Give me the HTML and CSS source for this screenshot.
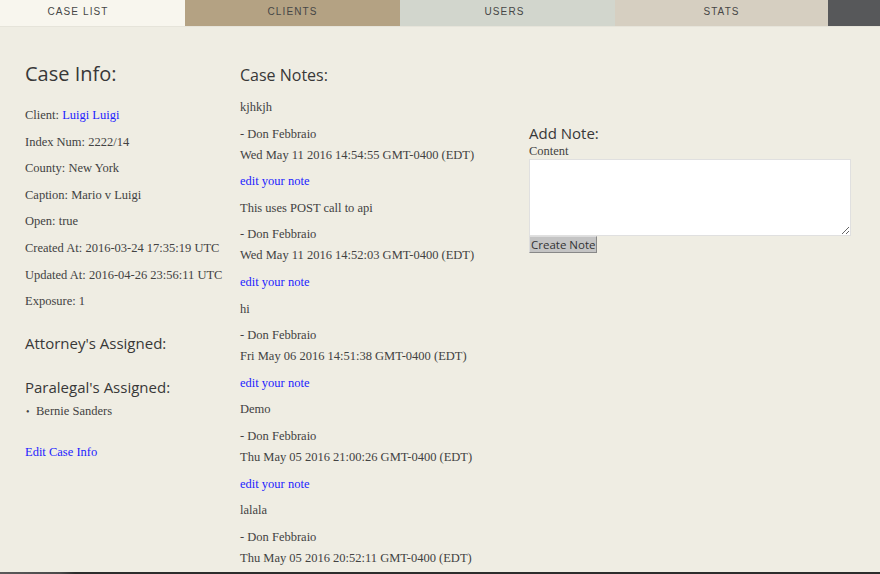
FILE: index.html
```html
<!DOCTYPE html>
<html>
<head>
<meta charset="utf-8">
<link rel="stylesheet" href="styles.css">
</head>
<body>
<nav class="tabs">
  <a class="tab tab-cases">CASE LIST</a>
  <a class="tab tab-clients">CLIENTS</a>
  <a class="tab tab-users">USERS</a>
  <a class="tab tab-stats">STATS</a>
  <div class="tab tab-end"></div>
</nav>
<main class="page">
  <section class="col col-info">
    <h1 class="title">Case Info:</h1>
    <p>Client: <a class="link">Luigi Luigi</a></p>
    <p>Index Num: 2222/14</p>
    <p>County: New York</p>
    <p>Caption: Mario v Luigi</p>
    <p>Open: true</p>
    <p>Created At: 2016-03-24 17:35:19 UTC</p>
    <p>Updated At: 2016-04-26 23:56:11 UTC</p>
    <p>Exposure: 1</p>
    <h3 class="sub">Attorney's Assigned:</h3>
    <h3 class="sub sub-para">Paralegal's Assigned:</h3>
    <ul class="list"><li>Bernie Sanders</li></ul>
    <p class="edit"><a class="link">Edit Case Info</a></p>
  </section>
  <section class="col col-notes">
    <h2 class="title2">Case Notes:</h2>
    <div class="note">
      <p>kjhkjh</p>
      <p class="author">- Don Febbraio</p>
      <p class="date">Wed May 11 2016 14:54:55 GMT-0400 (EDT)</p>
      <p><a class="link">edit your note</a></p>
    </div>
    <div class="note">
      <p>This uses POST call to api</p>
      <p class="author">- Don Febbraio</p>
      <p class="date">Wed May 11 2016 14:52:03 GMT-0400 (EDT)</p>
      <p><a class="link">edit your note</a></p>
    </div>
    <div class="note">
      <p>hi</p>
      <p class="author">- Don Febbraio</p>
      <p class="date">Fri May 06 2016 14:51:38 GMT-0400 (EDT)</p>
      <p><a class="link">edit your note</a></p>
    </div>
    <div class="note">
      <p>Demo</p>
      <p class="author">- Don Febbraio</p>
      <p class="date">Thu May 05 2016 21:00:26 GMT-0400 (EDT)</p>
      <p><a class="link">edit your note</a></p>
    </div>
    <div class="note">
      <p>lalala</p>
      <p class="author">- Don Febbraio</p>
      <p class="date last">Thu May 05 2016 20:52:11 GMT-0400 (EDT)</p>
    </div>
  </section>
  <section class="col col-add">
    <h3 class="sub add-title">Add Note:</h3>
    <form class="form">
      <label class="label">Content</label>
      <textarea class="area"></textarea>
      <button type="button" class="btn">Create Note</button>
    </form>
  </section>
</main>
<footer class="foot"></footer>
</body>
</html>
```

FILE: styles.css
```css
html, body {
  margin: 0;
  padding: 0;
  background: #efede3;
}
body {
  font-family: "Liberation Serif", "DejaVu Serif", serif;
  font-size: 12.5px;
  color: #424242;
}
.tabs {
  display: flex;
  height: 26px;
  border-bottom: 1px solid #e6e4da;
}
.tab {
  display: flex;
  align-items: center;
  justify-content: center;
  padding-bottom: 4px;
  box-sizing: border-box;
  font-family: "Liberation Sans", Arial, sans-serif;
  font-size: 10px;
  letter-spacing: 1.1px;
  color: #464646;
}
.tab-cases { width: 185px; background: #f8f6ee; padding-right: 29px; }
.tab-clients { width: 215px; background: #b4a283; }
.tab-users { width: 215px; background: #d2d6cd; padding-right: 6px; }
.tab-stats { width: 213px; background: #d6cfc1; }
.tab-end { flex: 1; background: #57585a; }

.page {
  display: flex;
  padding: 0 0 0 25px;
}
.col-info { width: 215px; }
.col-notes { width: 289px; }
.col-add { width: 322px; padding-top: 96px; }

p {
  margin: 10.6px 0;
  line-height: 16px;
}
.title {
  font-family: "Open Sans", "DejaVu Sans", sans-serif;
  font-weight: normal;
  font-size: 20px;
  margin: 33px 0 19px;
  line-height: 28px;
  color: #383838;
}
.title2 {
  font-family: "Open Sans", "DejaVu Sans", sans-serif;
  font-weight: normal;
  font-size: 16px;
  margin: 37px 0 13px;
  line-height: 22px;
  color: #383838;
}
.sub {
  font-family: "Open Sans", "DejaVu Sans", sans-serif;
  font-weight: normal;
  font-size: 15px;
  line-height: 20px;
  margin: 24px 0 0;
  color: #383838;
}
.sub-para { margin-top: 24px; }
.list {
  margin: 6px 0 0;
  padding-left: 11px;
  list-style: none;
  line-height: 16px;
}
.list li::before {
  content: "\2022";
  margin-left: -10px;
  width: 10px;
  display: inline-block;
  font-size: 10px;
}
.edit { margin-top: 24px; }
.link { color: #1d1dff; text-decoration: none; }

.author { margin-bottom: 5px; }
.date { margin-top: 0; }
.last { margin-bottom: 0; }

.add-title { margin: 0; }
.form { display: flex; flex-direction: column; align-items: flex-start; }
.label { line-height: 16px; }
.area {
  width: 322px;
  height: 77px;
  box-sizing: border-box;
  border: 1px solid #e0e0e0;
  background: #fff;
  margin: 0;
}
.btn {
  font-family: "Open Sans", "DejaVu Sans", sans-serif;
  font-size: 11.5px;
  color: #333;
  background: #c4c4c4;
  border: 1px solid #888;
  border-top-color: #ddd;
  border-left-color: #ddd;
  padding: 0 1px;
  height: 17px;
  line-height: 14px;
}
.foot {
  height: 10px;
  margin-top: 6px;
  background: linear-gradient(to right, #5a5a5a 0, #4a4a4a 60px, #2c2d2c 75px, #2c2d2c 100%);
}
```
